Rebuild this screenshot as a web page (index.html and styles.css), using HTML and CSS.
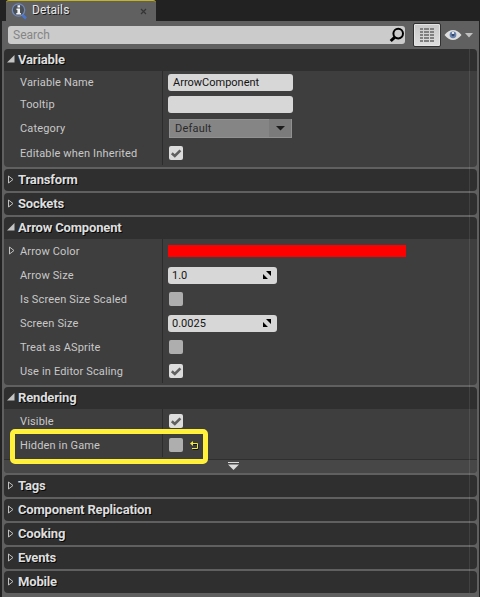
FILE: index.html
```html
<!DOCTYPE html>
<html lang="en">
<head>
<meta charset="utf-8">
<title>Details</title>
<link rel="stylesheet" href="styles.css">
</head>
<body>
<svg class="defs" width="0" height="0">
  <symbol id="open" viewBox="0 0 8 8"><path d="M7.5 0V7.5H0Z" fill="#c4c4c4"/></symbol>
  <symbol id="closed" viewBox="0 0 6 9"><path d="M.5 1V8L5 4.5Z" fill="none" stroke="#c0c0c0"/></symbol>
  <symbol id="tick" viewBox="0 0 14 14"><path d="M2.800 7.3 5.8 10 11.4 4.3" fill="none" stroke="#606060" stroke-width="2.6"/></symbol>
  <symbol id="spin" viewBox="0 0 8 8"><path d="M3 0H8V5ZM0 3V8H5Z" fill="#000"/></symbol>
</svg>
<div class="tabs">
  <div class="tab">
    <svg class="info" width="18" height="17" viewBox="0 0 18 17">
      <path d="M10.5 11 15 15.500" stroke="#4775d1" stroke-width="2.6"/>
      <circle cx="7.5" cy="7" r="6.2" fill="#4a5058" stroke="#7089b8" stroke-width="1.3"/>
      <path d="M6.5 2.2H9V4.5H6.5ZM5.5 5.5H9V10H10V11.5H5.3V10H6.4V7H5.5Z" fill="#f2f2f2"/>
    </svg>
    <span class="name">Details</span>
    <svg class="close" width="7" height="7" viewBox="0 0 7 7"><path d="M1 1 6 6M6 1 1 6" stroke="#353535" stroke-width="1.2"/></svg>
  </div>
</div>
<div class="panel">
  <div class="toolbar">
    <div class="search"><span>Search</span>
      <svg width="16" height="16" viewBox="0 0 16 16"><circle cx="9.2" cy="6.6" r="4.8" fill="none" stroke="#000" stroke-width="2"/><path d="M5.6 10.3 1.7 14" stroke="#000" stroke-width="3"/></svg>
    </div>
    <div class="matrix">
      <svg width="14" height="15" viewBox="0 0 14 15"><path d="M0 1H14M0 4H14M0 7H14M0 10H14M0 13H14" stroke="#808080" stroke-width="2" stroke-dasharray="3 1 5 1 4 0"/></svg>
    </div>
    <svg class="eye" width="18" height="12" viewBox="0 0 18 12"><path d="M.5 6Q4.5 1 9 1T17.500 6Q13.500 11 9 11T.5 6Z" fill="#dedede"/><circle cx="9" cy="5.800" r="3.400" fill="#6882ad"/><circle cx="9" cy="5.800" r="1.500" fill="#344766"/><circle cx="9" cy="4" r="1.100" fill="#fff"/></svg>
    <svg class="caret" width="8" height="5" viewBox="0 0 8 5"><path d="M0 0H8L4 4.500Z" fill="#c0c0c0"/></svg>
  </div>
  <div class="list">
    <section>
      <h2><svg class="open"><use href="#open"/></svg>Variable</h2>
      <div class="body">
        <div class="row r-name"><label>Variable Name</label><div class="val"><div class="input">ArrowComponent</div></div></div>
        <div class="row r-tip"><label>Tooltip</label><div class="val"><div class="input"></div></div></div>
        <div class="row r-cat"><label>Category</label><div class="val"><div class="combo"><span>Default</span><b><svg width="9" height="5" viewBox="0 0 9 5"><path d="M0 0H9L4.500 4.500Z" fill="#1c1c1c"/></svg></b></div></div></div>
        <div class="row r-edit"><label>Editable when Inherited</label><div class="val"><div class="check on"><svg><use href="#tick"/></svg></div></div></div>
      </div>
    </section>
    <section><h2><svg class="closed"><use href="#closed"/></svg>Transform</h2></section>
    <section><h2><svg class="closed"><use href="#closed"/></svg>Sockets</h2></section>
    <section>
      <h2><svg class="open"><use href="#open"/></svg>Arrow Component</h2>
      <div class="body">
        <div class="row"><label class="expand"><svg class="closed"><use href="#closed"/></svg>Arrow Color</label><div class="val"><div class="swatch"></div></div></div>
        <div class="row"><label>Arrow Size</label><div class="val"><div class="input num">1.0<svg><use href="#spin"/></svg></div></div></div>
        <div class="row"><label>Is Screen Size Scaled</label><div class="val"><div class="check"></div></div></div>
        <div class="row"><label>Screen Size</label><div class="val"><div class="input num">0.0025<svg><use href="#spin"/></svg></div></div></div>
        <div class="row"><label>Treat as ASprite</label><div class="val"><div class="check"></div></div></div>
        <div class="row"><label>Use in Editor Scaling</label><div class="val"><div class="check on"><svg><use href="#tick"/></svg></div></div></div>
      </div>
    </section>
    <section>
      <h2><svg class="open"><use href="#open"/></svg>Rendering</h2>
      <div class="body">
        <div class="row"><label>Visible</label><div class="val"><div class="check on"><svg><use href="#tick"/></svg></div></div></div>
        <div class="row marked"><label>Hidden in Game</label><div class="val"><div class="check"></div>
          <svg class="reset" width="9" height="9" viewBox="0 0 9 9"><path d="M3 3.500H8V8.500H3" fill="none" stroke="#111"/><path d="M1 2.500H7.500V7.500H2" fill="none" stroke="#f0ea38"/><path d="M0 2.500 3 0V5Z" fill="#f0ea38"/></svg></div></div>
        <div class="more"><svg width="11" height="9" viewBox="0 0 11 9"><path d="M0 .500H11" stroke="#ddd"/><path d="M0 2.500H11L5.500 8Z" fill="#ddd"/></svg></div>
      </div>
    </section>
    <section><h2><svg class="closed"><use href="#closed"/></svg>Tags</h2></section>
    <section><h2><svg class="closed"><use href="#closed"/></svg>Component Replication</h2></section>
    <section><h2><svg class="closed"><use href="#closed"/></svg>Cooking</h2></section>
    <section><h2><svg class="closed"><use href="#closed"/></svg>Events</h2></section>
    <section><h2><svg class="closed"><use href="#closed"/></svg>Mobile</h2></section>
  </div>
</div>
</body>
</html>
```
FILE: styles.css
```css
*, *::after { box-sizing: border-box; }
body { margin: 0; width: 480px; height: 597px; overflow: hidden; background: #222; font: 11px/14px Roboto, sans-serif; color: #c8c8c8; }
svg { display: block; flex: none; }
.defs { position: absolute; }
.tabs { height: 21px; padding-left: 6px; }
.tab { width: 150px; height: 21px; display: flex; align-items: center; background: #606060; border-top: 1px solid #c5b41d; border-radius: 3px 3px 0 0; padding-left: 5px; }
.name { width: 102px; margin: -2px 0 0 3px; font-size: 12px; letter-spacing: .1px; color: #e6e6e6; text-shadow: 1px 1px 0 #1a1a1a; }
.close { margin: 1px 0 0 6px; }
.panel { width: 477px; height: 576px; margin-left: 2px; padding: 0 2px; background: #606060; }
.toolbar { height: 28px; display: flex; align-items: center; padding-left: 4px; }
.search { width: 397px; height: 18px; display: flex; align-items: center; justify-content: space-between; padding: 0 0 0 5px; background: #cbcbcb; border-radius: 3px; color: #858585; font-size: 12px; letter-spacing: 0; }
.matrix { width: 28px; height: 24px; margin-left: 8px; display: flex; align-items: center; justify-content: center; border: 1px solid #303030; border-radius: 2px; background: linear-gradient(#c8c8c8, #dedede); box-shadow: inset 0 0 0 1px #e4e4e4; }
.eye { margin-left: 3px; }
.caret { margin-left: 3px; }
.list { position: relative; display: flex; flex-direction: column; gap: 2px; width: 473px; }
.list::after { content: ""; position: absolute; left: 465px; top: 0; width: 1px; height: 100%; background: rgba(255,255,255,.09); }
section { border-radius: 4px; overflow: hidden; }
h2 { margin: 0; height: 22px; display: flex; align-items: center; background: #2f2f2f; font-size: 13px; font-weight: 700; line-height: 20px; letter-spacing: -.16px; color: #dedede; text-shadow: 1px 1px 0 #080808; padding: 0 0 1px 3px; }
svg.open { width: 8px; height: 8px; margin: 0 3px 1px 0; }
svg.closed { width: 6px; height: 9px; }
h2 svg.closed { margin: 0 4px 1px 1px; }
.body { background: #3e3e3e; padding-bottom: 2px; }
.row { display: flex; height: 24px; }
.r-name { height: 23px; }
.r-tip { height: 21px; }
.r-cat { height: 27px; }
.r-edit { height: 23px; }
label { width: 159px; padding: 1px 0 0 16px; display: flex; align-items: center; letter-spacing: .15px; border-right: 1px solid #2c2c2c; }
.r-name label, .r-tip label, .r-cat label, .r-edit label { padding-top: 0; }
label.expand { padding-left: 5px; }
.expand svg.closed { margin: 0 5px 2px 0; }
.val { display: flex; align-items: center; padding-left: 5px; }
.r-edit .val { padding-bottom: 1px; }
.input { width: 125px; height: 17px; line-height: 17px; padding-left: 5px; background: #d7d7d7; border-radius: 3px; color: #141414; letter-spacing: 0; }
.num { display: flex; align-items: center; justify-content: space-between; width: 109px; padding: 0 6px 0 4px; }
.num svg { width: 8px; height: 8px; }
.combo { display: flex; align-items: center; justify-content: space-between; width: 123px; height: 19px; margin-left: 1px; padding-left: 6px; background: #858585; box-shadow: inset 0 0 0 1px #919191; color: #2a2a2a; letter-spacing: .2px; }
.combo b { width: 23px; height: 19px; display: flex; align-items: center; justify-content: center; background: #7b7b7b; box-shadow: inset 0 -1px #919191, inset -1px 0 #919191; }
.check { width: 14px; height: 14px; margin-left: 1px; background: #aeaeae; border-radius: 2px; }
.check.on { background: #dcdcdc; }
.check svg { width: 14px; height: 14px; }
.swatch { width: 238px; height: 12px; background: #f00; }
.reset { margin-left: 7px; }
.marked { position: relative; }
.marked::after { content: ""; position: absolute; left: 6px; top: -4px; width: 198px; height: 35px; border: 5px solid #fff03c; border-radius: 5px; z-index: 2; }
.more { height: 14px; margin: 2px 0 -2px; padding-top: 2px; border-top: 1px solid #2f2f2f; background: #474747; display: flex; justify-content: center; padding-right: 15px; }
```
